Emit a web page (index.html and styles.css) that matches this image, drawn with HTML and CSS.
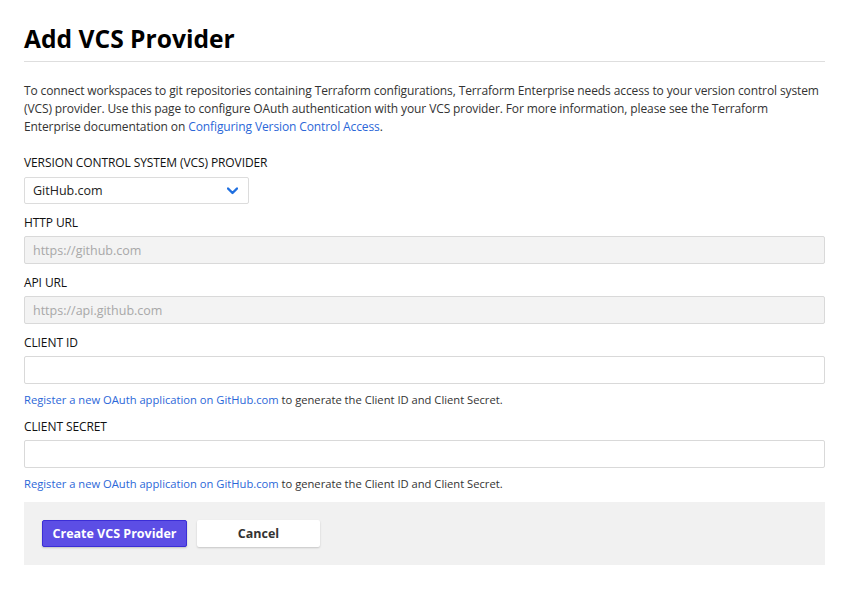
FILE: index.html
```html
<!DOCTYPE html>
<html>
<head>
<meta charset="utf-8">
<link rel="stylesheet" href="styles.css">
</head>
<body>
<main class="page">
  <h1 class="title">Add VCS Provider</h1>
  <p class="intro">To connect workspaces to git repositories containing Terraform configurations, Terraform Enterprise needs access to your version control system (VCS) provider. Use this page to configure OAuth authentication with your VCS provider. For more information, please see the Terraform Enterprise documentation on <a href="#">Configuring Version Control Access</a>.</p>

  <div class="field">
    <label class="label">VERSION CONTROL SYSTEM (VCS) PROVIDER</label>
    <div class="select">
      <span>GitHub.com</span>
      <svg class="chev" width="11" height="8" viewBox="0 0 11 8"><path d="M1 1.5 L5.5 6 L10 1.5" fill="none" stroke="#1f6fe0" stroke-width="2.4" stroke-linecap="round" stroke-linejoin="round"/></svg>
    </div>
  </div>

  <div class="field">
    <label class="label">HTTP URL</label>
    <div class="input disabled">https://github.com</div>
  </div>

  <div class="field">
    <label class="label">API URL</label>
    <div class="input disabled">https://api.github.com</div>
  </div>

  <div class="field">
    <label class="label">CLIENT ID</label>
    <div class="input"></div>
    <p class="help"><a href="#">Register a new OAuth application on GitHub.com</a> to generate the Client ID and Client Secret.</p>
  </div>

  <div class="field">
    <label class="label">CLIENT SECRET</label>
    <div class="input"></div>
    <p class="help"><a href="#">Register a new OAuth application on GitHub.com</a> to generate the Client ID and Client Secret.</p>
  </div>

  <div class="actions">
    <button class="btn primary">Create VCS Provider</button>
    <button class="btn secondary">Cancel</button>
  </div>
</main>
</body>
</html>
```

FILE: styles.css
```css
* { box-sizing: border-box; }
html, body { margin: 0; padding: 0; background: #fff; }
body {
  font-family: "Open Sans", "Noto Sans", sans-serif;
  color: #1f1f1f;
  font-size: 12px;
}
.page {
  width: 801px;
  margin-left: 24px;
  padding-top: 22px;
}
.title {
  margin: 0;
  font-size: 24.6px;
  font-weight: 700;
  line-height: 34px;
  color: #000;
  padding-bottom: 5px;
  border-bottom: 1px solid #dedede;
}
.intro {
  margin: 20px 0 0;
  font-size: 12px;
  line-height: 18px;
  color: #333;
  letter-spacing: -0.11px;
}
a { color: #2b67d8; text-decoration: none; }
.field { margin-top: 10px; }
.intro + .field { margin-top: 18px; }
.label {
  display: block;
  font-size: 12px;
  line-height: 18px;
  color: #111;
  margin-bottom: 4px;
  letter-spacing: -0.1px;
}
.intro + .field .label { margin-bottom: 5px; }
.select {
  width: 225px;
  height: 27px;
  border: 1px solid #dcdcdc;
  border-radius: 2px;
  display: flex;
  align-items: center;
  justify-content: space-between;
  padding: 0 10px 0 8px;
  font-size: 12.5px;
  color: #222;
}
.input {
  height: 28px;
  border: 1px solid #d9d9d9;
  border-radius: 2px;
  background: #fff;
  padding: 0 8px;
  display: flex;
  align-items: center;
  font-size: 12.5px;
}
.input.disabled { background: #f3f3f3; color: #a8a8a8; }
.help {
  margin: 8px 0 0;
  font-size: 11.2px;
  line-height: 16px;
  color: #333;
}
.actions {
  margin-top: 10px;
  background: #f1f1f1;
  height: 63px;
  padding: 18px 18px;
  display: flex;
  gap: 10px;
  align-items: flex-start;
}
.btn {
  height: 27px;
  font-family: inherit;
  font-size: 12.5px;
  font-weight: 700;
  border-radius: 2px;
  cursor: pointer;
}
.primary {
  width: 145px;
  background: #5c4ee5;
  border: 1px solid #3b2ed6;
  color: #fff;
  box-shadow: 0 1px 2px rgba(0,0,0,0.2);
}
.secondary {
  width: 123px;
  background: #fff;
  border: none;
  color: #333;
  box-shadow: 0 1px 2px rgba(0,0,0,0.18);
}
```
